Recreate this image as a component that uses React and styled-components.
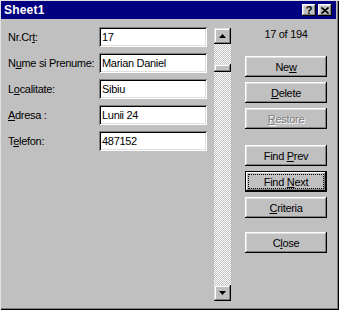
import React from 'react';
import styled, { createGlobalStyle } from 'styled-components';

const GlobalStyle = createGlobalStyle`
  html, body {
    margin: 0;
    padding: 0;
    background: #c0c0c0;
  }
  body {
    font-family: "Liberation Sans", Arial, sans-serif;
    font-size: 11px;
    letter-spacing: -0.3px;
    color: #000;
  }
`;

const Window = styled.div`
  width: 339px;
  height: 310px;
  box-sizing: border-box;
  display: flex;
  flex-direction: column;
  background: #c0c0c0;
  border-top: 1px solid #dfdfdf;
  border-left: 1px solid #dfdfdf;
  padding: 0 3px 2px 0;
  box-shadow: inset -1px -1px #000, inset -2px -2px #808080;
`;

const TitleBar = styled.div`
  height: 18px;
  flex: none;
  display: flex;
  align-items: center;
  background: #000080;
  padding: 0 4px 0 3px;
  gap: 2px;
`;

const Title = styled.span`
  flex: 1;
  color: #fff;
  font-weight: 700;
  font-size: 12px;
  letter-spacing: 0.2px;
`;

const CaptionButton = styled.div`
  width: 14px;
  height: 12px;
  box-sizing: border-box;
  display: flex;
  align-items: center;
  justify-content: center;
  background: #c0c0c0;
  font-weight: 700;
  font-size: 11px;
  line-height: 1;
  letter-spacing: 0;
  box-shadow: inset -1px -1px #000, inset 1px 1px #fff, inset -2px -2px #808080,
    inset 2px 2px #dfdfdf;
`;

const Body = styled.div`
  flex: 1;
  display: flex;
  padding: 8px 0 7px 7px;
`;

const Form = styled.div`
  display: grid;
  grid-template-columns: 91px 108px;
  grid-auto-rows: 20px;
  row-gap: 6px;
  align-content: start;
`;

const Label = styled.label`
  display: flex;
  align-items: center;
  white-space: pre;
`;

const Field = styled.div`
  box-sizing: border-box;
  height: 20px;
  display: flex;
  align-items: center;
  padding: 0 3px;
  background: #fff;
  box-shadow: inset 1px 1px #808080, inset -1px -1px #fff, inset 2px 2px #000,
    inset -2px -2px #dfdfdf;
`;

const Key = styled.u`
  text-decoration: underline;
  text-underline-offset: 1px;
`;

const ScrollBar = styled.div`
  width: 17px;
  margin: 1px 0 0 7px;
  display: flex;
  flex-direction: column;
  background-color: #fff;
  background-image: repeating-conic-gradient(#c0c0c0 0 25%, #fff 0 50%);
  background-size: 2px 2px;
`;

const ScrollArrow = styled.div`
  height: 16px;
  flex: none;
  box-sizing: border-box;
  display: flex;
  align-items: center;
  justify-content: center;
  background: #c0c0c0;
  box-shadow: inset -1px -1px #000, inset 1px 1px #dfdfdf, inset -2px -2px #808080,
    inset 2px 2px #fff;
`;

const Track = styled.div`
  flex: 1;
`;

const Thumb = styled.div`
  height: 8px;
  background: #c0c0c0;
  box-shadow: inset -1px -1px #000, inset 1px 1px #dfdfdf, inset -2px -2px #808080,
    inset 2px 2px #fff;
`;

const Side = styled.div`
  width: 82px;
  margin-left: 14px;
  display: flex;
  flex-direction: column;
`;

const Counter = styled.div`
  height: 14px;
  line-height: 14px;
  margin-bottom: 10px;
  text-align: center;
`;

const Button = styled.div`
  height: 21px;
  box-sizing: border-box;
  margin-top: ${(p) => p.$gap || 5}px;
  padding: 3px;
  display: flex;
  background: #c0c0c0;
  color: ${(p) => (p.$disabled ? '#808080' : '#000')};
  text-shadow: ${(p) => (p.$disabled ? '1px 1px #fff' : 'none')};
  box-shadow: ${(p) =>
    p.$default
      ? 'inset 0 0 0 1px #000, inset -2px -2px #000, inset 2px 2px #fff, inset -3px -3px #808080'
      : 'inset -1px -1px #000, inset 1px 1px #fff, inset -2px -2px #808080, inset 2px 2px #dfdfdf'};
`;

const ButtonFace = styled.span`
  flex: 1;
  display: flex;
  align-items: center;
  justify-content: center;
  white-space: pre;
  border: 1px dotted ${(p) => (p.$focused ? '#000' : 'transparent')};
`;

const fields = [
  { label: ['Nr.Cr', 't', ':'], value: '17' },
  { label: ['N', 'u', 'me si Prenume:'], value: 'Marian Daniel' },
  { label: ['L', 'o', 'calitate:'], value: 'Sibiu' },
  { label: ['', 'A', 'dresa :'], value: 'Lunii 24' },
  { label: ['T', 'e', 'lefon:'], value: '487152' },
];

const buttons = [
  { text: ['Ne', 'w', ''], gap: 0 },
  { text: ['', 'D', 'elete'] },
  { text: ['', 'R', 'estore'], disabled: true },
  { text: ['Find ', 'P', 'rev'], gap: 16 },
  { text: ['Find ', 'N', 'ext'], isDefault: true },
  { text: ['', 'C', 'riteria'] },
  { text: ['C', 'l', 'ose'], gap: 14 },
];

const Mnemonic = ({ parts }) => (
  <span>
    {parts[0]}
    <Key>{parts[1]}</Key>
    {parts[2]}
  </span>
);

const Arrow = ({ down }) => (
  <svg width="7" height="4" viewBox="0 0 7 4">
    <polygon points={down ? '0,0 7,0 3.5,4' : '0,4 7,4 3.5,0'} fill="#000" />
  </svg>
);

const App = () => {
  const record = 17;
  const total = 194;
  const thumbOffset = Math.round((record / total) * 232);

  return (
    <>
      <GlobalStyle />
      <Window>
        <TitleBar>
          <Title>Sheet1</Title>
          <CaptionButton>?</CaptionButton>
          <CaptionButton>
            <svg width="8" height="7" viewBox="0 0 8 7">
              <path d="M0.5 0.5 L7.5 6.5 M7.5 0.5 L0.5 6.5" stroke="#000" strokeWidth="1.6" />
            </svg>
          </CaptionButton>
        </TitleBar>
        <Body>
          <Form>
            {fields.map((f) => (
              <React.Fragment key={f.value}>
                <Label>
                  <Mnemonic parts={f.label} />
                </Label>
                <Field>{f.value}</Field>
              </React.Fragment>
            ))}
          </Form>
          <ScrollBar>
            <ScrollArrow>
              <Arrow />
            </ScrollArrow>
            <Track>
              <Thumb style={{ marginTop: thumbOffset }} />
            </Track>
            <ScrollArrow>
              <Arrow down />
            </ScrollArrow>
          </ScrollBar>
          <Side>
            <Counter>
              {record} of {total}
            </Counter>
            {buttons.map((b) => (
              <Button
                key={b.text.join('')}
                $gap={b.gap}
                $disabled={b.disabled}
                $default={b.isDefault}
              >
                <ButtonFace $focused={b.isDefault}>
                  <Mnemonic parts={b.text} />
                </ButtonFace>
              </Button>
            ))}
          </Side>
        </Body>
      </Window>
    </>
  );
};

export default App;
